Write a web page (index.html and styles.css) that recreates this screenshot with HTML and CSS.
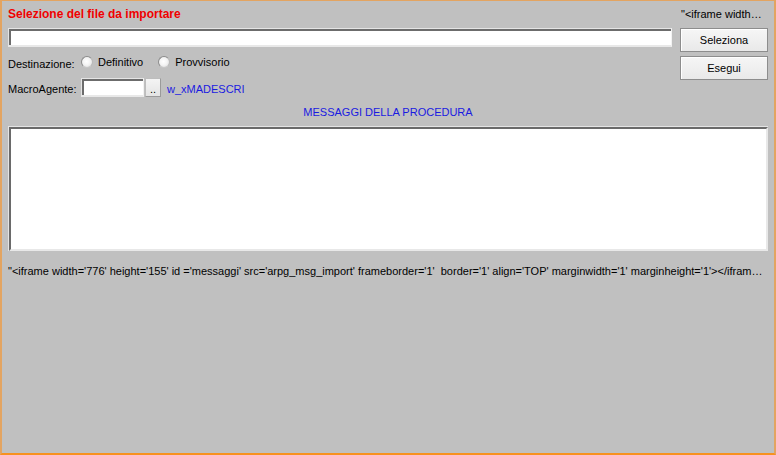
FILE: index.html
```html
<!DOCTYPE html>
<html lang="it">
<head>
<meta charset="utf-8">
<title>Selezione del file da importare</title>
<link rel="stylesheet" href="styles.css">
</head>
<body>
<div class="window">
  <div class="top">
    <div class="left">
      <div class="title">Selezione del file da importare</div>
      <div class="file-input sunken"></div>
      <div class="row dest">
        <span class="label">Destinazione:</span>
        <span class="radio"><span class="dot"></span>Definitivo</span>
        <span class="radio"><span class="dot"></span>Provvisorio</span>
      </div>
      <div class="row macro">
        <span class="label">MacroAgente:</span>
        <span class="small-input sunken"></span>
        <span class="dots">..</span>
        <span class="link">w_xMADESCRI</span>
      </div>
    </div>
    <div class="right">
      <div class="note">"&lt;iframe width…</div>
      <div class="btn">Seleziona</div>
      <div class="btn">Esegui</div>
    </div>
  </div>
  <div class="caption">MESSAGGI DELLA PROCEDURA</div>
  <div class="msgbox"><div class="msginner"></div></div>
  <div class="code">"&lt;iframe width='776' height='155' id ='messaggi' src='arpg_msg_import' frameborder='1'&nbsp; border='1' align='TOP' marginwidth='1' marginheight='1'&gt;&lt;/ifram…</div>
</div>
</body>
</html>
```

FILE: styles.css
```css
* { box-sizing: border-box; }
html, body { margin: 0; padding: 0; }
body {
  font-family: "Liberation Sans", Arial, sans-serif;
  font-size: 11px;
  color: #000;
  background: #c0c0c0;
}
.window {
  width: 776px;
  height: 455px;
  background: #c0c0c0;
  border: 2px solid #e3a461;
  border-bottom-color: #f7911f;
  border-top-width: 1px;
  padding: 5px 6px 0 6px;
  display: flex;
  flex-direction: column;
}
.top {
  display: flex;
  gap: 8px;
}
.left {
  flex: 1;
  display: flex;
  flex-direction: column;
}
.right {
  width: 88px;
  display: flex;
  flex-direction: column;
}
.title {
  height: 16px;
  line-height: 16px;
  font-weight: bold;
  color: #f00000;
  font-size: 12px;
}
.sunken {
  background: #fff;
  border-style: solid;
  border-width: 1px 1px 2px 1px;
  border-color: #e4e4e4 #f2f2f2 #e8e8e8 #e4e4e4;
  box-shadow: inset 2px 2px 0 #6c6c6c;
}
.file-input {
  margin-top: 6px;
  height: 19px;
}
.row {
  display: flex;
  align-items: center;
}
.dest {
  margin-top: 4px;
  height: 22px;
}
.label {
  padding-top: 3px;
}
.dest .label { width: 73px; }
.radio {
  display: flex;
  align-items: center;
  margin-right: 15px;
}
.dot {
  width: 12px;
  height: 12px;
  border-radius: 50%;
  border: 1px solid #8d8d8d;
  border-bottom-color: #c8c8c8;
  border-right-color: #b8b8b8;
  background: radial-gradient(circle at 45% 45%, #ffffff 0%, #f4f4f4 45%, #d6d6d6 100%);
  margin-right: 5px;
  margin-top: 0;
}
.macro {
  margin-top: 5px;
  height: 19px;
}
.macro .label { width: 73px; padding-top: 2px; }
.small-input {
  width: 63px;
  height: 19px;
}
.dots {
  width: 16px;
  height: 19px;
  margin-left: 1px;
  border: 1px solid #9a9a9a;
  border-top-color: #bdbdbd;
  border-left-color: #bdbdbd;
  background: linear-gradient(#f4f4f4, #e4e4e4);
  text-align: center;
  line-height: 20px;
  font-size: 11px;
}
.link {
  margin-left: 6px;
  padding-top: 2px;
  color: #1a1ae0;
}
.note {
  height: 16px;
  line-height: 16px;
  padding-left: 1px;
  white-space: nowrap;
}
.btn {
  height: 24px;
  margin-top: 6px;
  border: 1px solid #8d8d8d;
  background: linear-gradient(#f6f6f6, #e9e9e9);
  display: flex;
  align-items: center;
  justify-content: center;
  box-shadow: inset 1px 1px 0 #ffffff;
}
.btn + .btn { margin-top: 4px; }
.caption {
  margin-top: 7px;
  height: 16px;
  line-height: 16px;
  text-align: center;
  color: #1a1ae0;
}
.msgbox {
  margin-top: 6px;
  height: 125px;
  border-top: 1px solid #e4e4e4;
  border-left: 1px solid #e4e4e4;
}
.msginner {
  height: 100%;
  background: #fff;
  border-style: solid;
  border-width: 2px;
  border-color: #6a6a6a #e8e8e8 #e8e8e8 #6a6a6a;
}
.code {
  margin-top: 12px;
  height: 16px;
  line-height: 16px;
  white-space: nowrap;
}
```
